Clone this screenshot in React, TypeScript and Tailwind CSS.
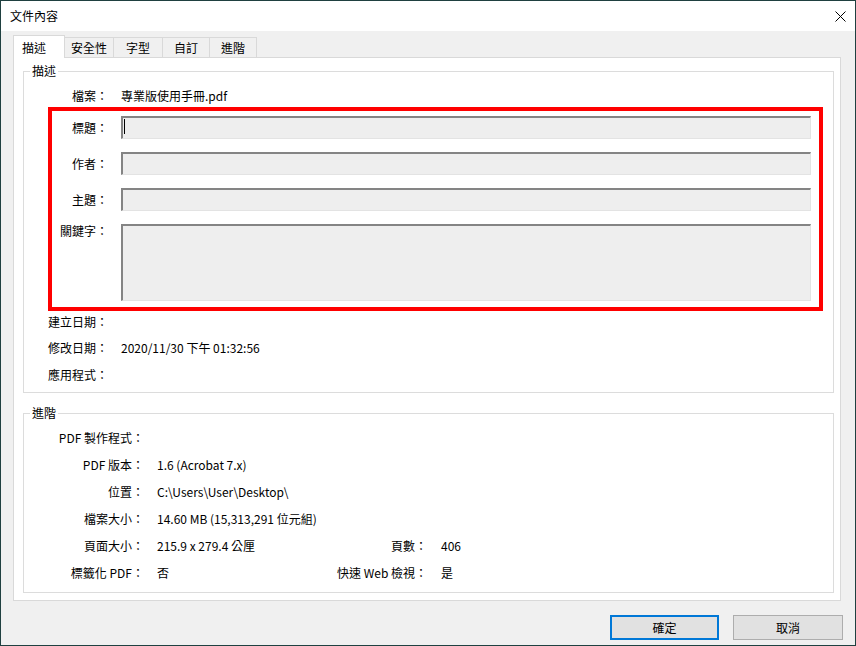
import React from "react";

const field =
  "bg-[#eeeeee] border-t-2 border-l-2 border-t-[#848484] border-l-[#848484] border-b border-r border-b-[#e3e3e3] border-r-[#e3e3e3]";

function Tab({ label, active, width }: { label: string; active?: boolean; width: string }) {
  if (active) {
    return (
      <div className={`relative z-10 -mb-px h-[23px] ${width} bg-white border border-b-0 border-[#d9d9d9] flex items-center pl-[8px] pt-[1px]`}>
        {label}
      </div>
    );
  }
  return (
    <div className={`h-[20px] ${width} bg-[#f0f0f0] border-t border-r border-[#d9d9d9] flex items-center justify-center pt-[1px]`}>
      {label}
    </div>
  );
}

function Legend({ text }: { text: string }) {
  return (
    <span className="absolute -top-[8px] left-[6px] bg-white px-[2px] leading-[14px]">{text}</span>
  );
}

export default function App() {
  return (
    <div className="w-[856px] h-[646px] border border-[#1f4040] bg-[#f0f0f0] flex flex-col text-[12px] text-black font-['Noto_Sans_CJK_TC','Noto_Sans',sans-serif]">
      {/* title bar */}
      <div className="h-[30px] bg-white flex items-center justify-between pl-[9px] pr-[9px]">
        <span className="leading-none">文件內容</span>
        <svg width="11" height="11" viewBox="0 0 11 11">
          <path d="M0.5 0.5 L10.5 10.5 M10.5 0.5 L0.5 10.5" stroke="#000" strokeWidth="1" />
        </svg>
      </div>

      <div className="flex flex-col pt-[4px] pl-[12px]">
        {/* tabs */}
        <div className="h-[22px] flex items-end">
          <Tab label="描述" active width="w-[52px]" />
          <Tab label="安全性" width="w-[49px]" />
          <Tab label="字型" width="w-[49px]" />
          <Tab label="自訂" width="w-[47px]" />
          <Tab label="進階" width="w-[47px]" />
        </div>

        {/* panel */}
        <div className="w-[828px] h-[544px] bg-white border border-[#d9d9d9] pt-[13px] pl-[9px]">
          {/* 描述 */}
          <div className="relative w-[811px] h-[322px] border border-[#dcdcdc] pt-[14px]">
            <Legend text="描述" />
            <div className="h-[20px] flex items-center">
              <span className="w-[84px] text-right">檔案：</span>
              <span className="ml-[13px]">專業版使用手冊.pdf</span>
            </div>

            <div className="mt-[1px] ml-[24px] w-[775px] h-[204px] border-4 border-[#ff0000] pt-[5px] flex flex-col">
              <div className="flex items-center h-[23px]">
                <span className="w-[56px] text-right">標題：</span>
                <div className={`ml-[13px] w-[690px] h-[23px] ${field} pl-[1px] pt-[1px]`}>
                  <div className="w-[1px] h-[15px] bg-black" />
                </div>
              </div>
              <div className="flex items-center h-[23px] mt-[13px]">
                <span className="w-[56px] text-right">作者：</span>
                <div className={`ml-[13px] w-[690px] h-[23px] ${field}`} />
              </div>
              <div className="flex items-center h-[23px] mt-[13px]">
                <span className="w-[56px] text-right">主題：</span>
                <div className={`ml-[13px] w-[690px] h-[23px] ${field}`} />
              </div>
              <div className="flex items-start h-[77px] mt-[13px]">
                <span className="w-[56px] text-right leading-[14px]">關鍵字：</span>
                <div className={`ml-[13px] w-[690px] h-[77px] ${field}`} />
              </div>
            </div>

            <div className="h-[22px] flex items-center">
              <span className="w-[84px] text-right">建立日期：</span>
            </div>
            <div className="h-[22px] mt-[4px] flex items-center">
              <span className="w-[84px] text-right">修改日期：</span>
              <span className="ml-[13px]">2020/11/30 下午 01:32:56</span>
            </div>
            <div className="h-[22px] mt-[5px] flex items-center">
              <span className="w-[84px] text-right">應用程式：</span>
            </div>
          </div>

          {/* 進階 */}
          <div className="relative mt-[20px] w-[811px] h-[180px] border border-[#dcdcdc] pt-[10px]">
            <Legend text="進階" />
            {[
              ["PDF 製作程式：", "", "", ""],
              ["PDF 版本：", "1.6 (Acrobat 7.x)", "", ""],
              ["位置：", "C:\\Users\\User\\Desktop\\", "", ""],
              ["檔案大小：", "14.60 MB (15,313,291 位元組)", "", ""],
              ["頁面大小：", "215.9 x 279.4 公厘", "頁數：", "406"],
              ["標籤化 PDF：", "否", "快速 Web 檢視：", "是"],
            ].map(([l1, v1, l2, v2]) => (
              <div key={l1} className="h-[27px] flex items-center">
                <span className="w-[120px] text-right whitespace-nowrap">{l1}</span>
                <span className="ml-[13px] w-[170px] whitespace-nowrap">{v1}</span>
                <span className="w-[100px] text-right whitespace-nowrap">{l2}</span>
                <span className="ml-[14px]">{v2}</span>
              </div>
            ))}
          </div>
        </div>
      </div>

      {/* buttons */}
      <div className="mt-[14px] flex justify-end gap-[14px] pr-[12px]">
        <button className="w-[109px] h-[25px] bg-[#e1e1e1] border-2 border-[#0078d7] flex items-center justify-center">
          確定
        </button>
        <button className="w-[110px] h-[25px] bg-[#e1e1e1] border border-[#adadad] flex items-center justify-center">
          取消
        </button>
      </div>
    </div>
  );
}
